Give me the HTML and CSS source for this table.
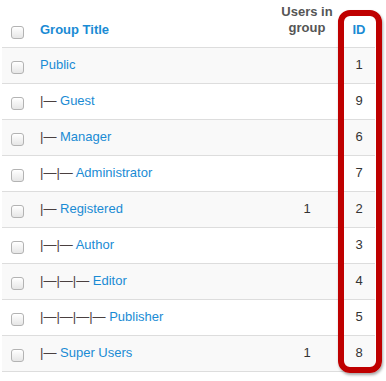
FILE: index.html
```html
<!DOCTYPE html>
<html>
<head>
<meta charset="utf-8">
<link rel="stylesheet" href="styles.css">
</head>
<body>
<div class="wrap">
  <table class="groups">
    <thead>
      <tr>
        <th class="c-check"><span class="cb"></span></th>
        <th class="c-title"><span class="sort">Group Title</span></th>
        <th class="c-users">Users in<br>group</th>
        <th class="c-id"><span class="sort">ID</span></th>
      </tr>
    </thead>
    <tbody>
      <tr><td class="c-check"><span class="cb"></span></td><td class="c-title"><a class="lnk">Public</a></td><td class="c-users"></td><td class="c-id">1</td></tr>
      <tr><td class="c-check"><span class="cb"></span></td><td class="c-title"><span class="tree">|—</span> <a class="lnk">Guest</a></td><td class="c-users"></td><td class="c-id">9</td></tr>
      <tr><td class="c-check"><span class="cb"></span></td><td class="c-title"><span class="tree">|—</span> <a class="lnk">Manager</a></td><td class="c-users"></td><td class="c-id">6</td></tr>
      <tr><td class="c-check"><span class="cb"></span></td><td class="c-title"><span class="tree">|—|—</span> <a class="lnk">Administrator</a></td><td class="c-users"></td><td class="c-id">7</td></tr>
      <tr><td class="c-check"><span class="cb"></span></td><td class="c-title"><span class="tree">|—</span> <a class="lnk">Registered</a></td><td class="c-users">1</td><td class="c-id">2</td></tr>
      <tr><td class="c-check"><span class="cb"></span></td><td class="c-title"><span class="tree">|—|—</span> <a class="lnk">Author</a></td><td class="c-users"></td><td class="c-id">3</td></tr>
      <tr><td class="c-check"><span class="cb"></span></td><td class="c-title"><span class="tree">|—|—|—</span> <a class="lnk">Editor</a></td><td class="c-users"></td><td class="c-id">4</td></tr>
      <tr><td class="c-check"><span class="cb"></span></td><td class="c-title"><span class="tree">|—|—|—|—</span> <a class="lnk">Publisher</a></td><td class="c-users"></td><td class="c-id">5</td></tr>
      <tr><td class="c-check"><span class="cb"></span></td><td class="c-title"><span class="tree">|—</span> <a class="lnk">Super Users</a></td><td class="c-users">1</td><td class="c-id">8</td></tr>
    </tbody>
  </table>
  <div class="highlight"></div>
</div>
</body>
</html>
```

FILE: styles.css
```css
html, body {
  margin: 0;
  padding: 0;
  background: #ffffff;
}

body {
  font-family: "Liberation Sans", Arial, sans-serif;
  font-size: 13px;
  color: #333333;
}

.wrap {
  position: relative;
  width: 386px;
  height: 381px;
}

.groups {
  margin-left: 2px;
  width: 373px;
  border-collapse: collapse;
  table-layout: fixed;
}

.groups th {
  height: 47px;
  padding: 0 0 11px 0;
  box-sizing: border-box;
  vertical-align: bottom;
  line-height: 16px;
  font-weight: bold;
  color: #555555;
  white-space: nowrap;
}

.groups th.c-title,
.groups th.c-id,
.groups th.c-check {
  padding-bottom: 9px;
}

.groups td {
  height: 36px;
  padding: 0;
  box-sizing: border-box;
  border-top: 1px solid #dddddd;
  vertical-align: middle;
  line-height: 16px;
  white-space: nowrap;
}

.groups tbody tr:last-child td {
  border-bottom: 1px solid #dddddd;
}

.groups tbody tr:nth-child(odd) td {
  background: #f9f9f9;
}

.c-check {
  width: 38px;
  text-align: left;
}

.c-check .cb {
  margin-left: 9px;
  position: relative;
  top: 2px;
}

.c-title {
  text-align: left;
}

.c-users {
  width: 52px;
  text-align: center;
}

.c-id {
  width: 42px;
  text-align: center;
}

.groups .c-id {
  padding-left: 10px;
}

.sort {
  color: #1a8bd4;
  font-weight: bold;
}

.cb {
  display: inline-block;
  width: 11px;
  height: 11px;
  border: 1px solid #b3b3b3;
  border-radius: 3px;
  background: linear-gradient(#ffffff, #e6e6e6);
  box-shadow: inset 0 1px 0 #ffffff;
  vertical-align: middle;
}

.lnk {
  color: #1a8bd4;
  text-decoration: none;
}

.tree {
  color: #4a4040;
}

.highlight {
  position: absolute;
  left: 338px;
  top: 10px;
  width: 44px;
  height: 363px;
  box-sizing: border-box;
  border: 6px solid #bf0000;
  border-radius: 12px;
  box-shadow: 1px 2px 3px rgba(0, 0, 0, 0.35);
}
```
